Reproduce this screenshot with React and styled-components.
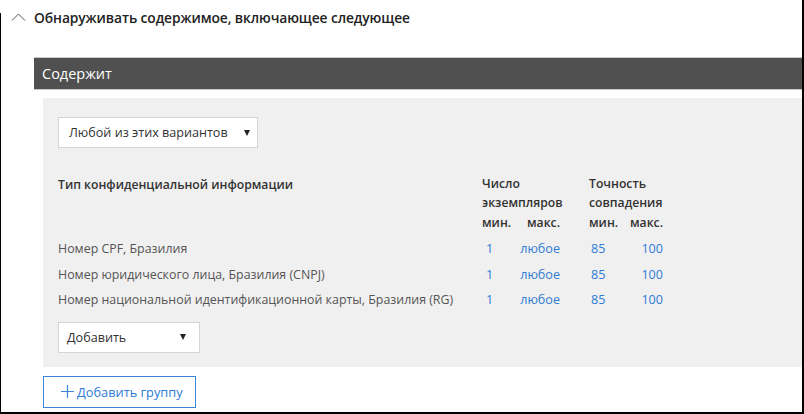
import React from "react";
import styled, { createGlobalStyle } from "styled-components";

const GlobalStyle = createGlobalStyle`
  html, body {
    margin: 0;
    padding: 0;
    background: #fff;
  }
  body {
    font-family: "Open Sans", "Noto Sans", sans-serif;
  }
`;

const Frame = styled.div`
  position: relative;
  width: 804px;
  height: 414px;
  box-sizing: border-box;
  border-right: 2px solid #000;
  border-bottom: 2px solid #000;
  background: #fff;
  overflow: hidden;

  &::before {
    content: "";
    position: absolute;
    left: 0;
    top: 13px;
    bottom: 0;
    width: 1px;
    background: #000;
  }
`;

const TitleRow = styled.div`
  display: flex;
  align-items: center;
  height: 34px;
  padding-left: 11px;
  gap: 8px;
`;

const Title = styled.span`
  font-size: 13.8px;
  font-weight: 600;
  color: #222;
  letter-spacing: -0.1px;
`;

const Section = styled.div`
  margin: 23px 0 0 34px;
`;

const Bar = styled.div`
  height: 31px;
  background: #505050;
  border-top: 1px solid #c8c8c8;
  border-bottom: 1px solid #c8c8c8;
  display: flex;
  align-items: center;
  padding-left: 8px;
  color: #fff;
  font-size: 14.5px;
`;

const Panel = styled.div`
  margin: 8px 0 0 9px;
  background: #f0f0f0;
  padding: 19px 15px 14px;
`;

const Select = styled.div`
  display: flex;
  align-items: center;
  justify-content: space-between;
  box-sizing: border-box;
  width: ${(p) => p.$width}px;
  height: 31px;
  background: #fff;
  border: 1px solid #d4d4d4;
  padding: 0 ${(p) => p.$arrowPad}px 0 ${(p) => p.$textPad}px;
  font-size: 12.6px;
  color: #333;
`;

const Arrow = styled.span`
  width: 0;
  height: 0;
  border-left: 3.5px solid transparent;
  border-right: 3.5px solid transparent;
  border-top: 6px solid #222;
`;

const Table = styled.div`
  display: grid;
  grid-template-columns: 424px 34px 44px 29px 36px 38px;
  margin: 27px 0 9px;
  font-size: 12.2px;
`;

const Head = styled.div`
  color: #333;
  font-weight: 600;
  line-height: 19px;
  grid-column: ${(p) => p.$col};
  text-align: ${(p) => (p.$right ? "right" : "left")};
  white-space: nowrap;
`;

const HeadStack = styled.div`
  grid-column: ${(p) => p.$col};
  color: #333;
  font-weight: 600;
  line-height: 18.5px;
  white-space: nowrap;
  margin-bottom: 1px;
`;

const Name = styled.div`
  color: #555;
  line-height: 25.5px;
  grid-column: 1;
  white-space: nowrap;
  font-size: 12.4px;
`;

const Val = styled.div`
  color: #2f7bd5;
  line-height: 25.5px;
  font-size: 12.6px;
  grid-column: ${(p) => p.$col};
  text-align: ${(p) => (p.$right ? "right" : "left")};
  padding-left: ${(p) => (p.$right ? 0 : p.$indent || 3)}px;
`;

const TopSpacer = styled.div`
  grid-column: 1 / -1;
  height: 4px;
`;

const AddGroup = styled.button`
  display: flex;
  align-items: center;
  gap: 3px;
  margin: 9px 0 0 9px;
  box-sizing: border-box;
  width: 153px;
  height: 32px;
  background: #fff;
  border: 1px solid #3b86d8;
  padding: 0 0 0 17px;
  font-family: inherit;
  font-size: 12.8px;
  color: #2f7bd5;
  cursor: pointer;
`;

const rows = [
  "Номер CPF, Бразилия",
  "Номер юридического лица, Бразилия (CNPJ)",
  "Номер национальной идентификационной карты, Бразилия (RG)",
];

const App = () => {
  return (
    <Frame>
      <GlobalStyle />
      <TitleRow>
        <svg width="15" height="10" viewBox="0 0 15 10">
          <polyline points="1,8.5 7.5,2 14,8.5" fill="none" stroke="#555" strokeWidth="1" />
        </svg>
        <Title>Обнаруживать содержимое, включающее следующее</Title>
      </TitleRow>
      <Section>
        <Bar>Содержит</Bar>
        <Panel>
          <Select $width={200} $textPad={10} $arrowPad={7}>
            Любой из этих вариантов
            <Arrow />
          </Select>
          <Table>
            <Head $col={1}>Тип конфиденциальной информации</Head>
            <HeadStack $col="2 / 4">
              Число
              <br />
              экземпляров
            </HeadStack>
            <HeadStack $col="5 / 7">
              Точность
              <br />
              совпадения
            </HeadStack>
            <Head $col={2}>мин.</Head>
            <Head $col={3} $right>
              макс.
            </Head>
            <Head $col={5}>мин.</Head>
            <Head $col={6} $right>
              макс.
            </Head>
            <TopSpacer />
            {rows.map((name) => (
              <React.Fragment key={name}>
                <Name>{name}</Name>
                <Val $col={2} $indent={4}>
                  1
                </Val>
                <Val $col={3} $right>
                  любое
                </Val>
                <Val $col={5} $indent={2}>
                  85
                </Val>
                <Val $col={6} $right>
                  100
                </Val>
              </React.Fragment>
            ))}
          </Table>
          <Select $width={142} $textPad={8} $arrowPad={13}>
            Добавить
            <Arrow />
          </Select>
        </Panel>
        <AddGroup>
          <svg width="13" height="13" viewBox="0 0 13 13">
            <path d="M6.5 0v13M0 6.5h13" stroke="#3b86d8" strokeWidth="1.2" />
          </svg>
          Добавить группу
        </AddGroup>
      </Section>
    </Frame>
  );
};

export default App;
